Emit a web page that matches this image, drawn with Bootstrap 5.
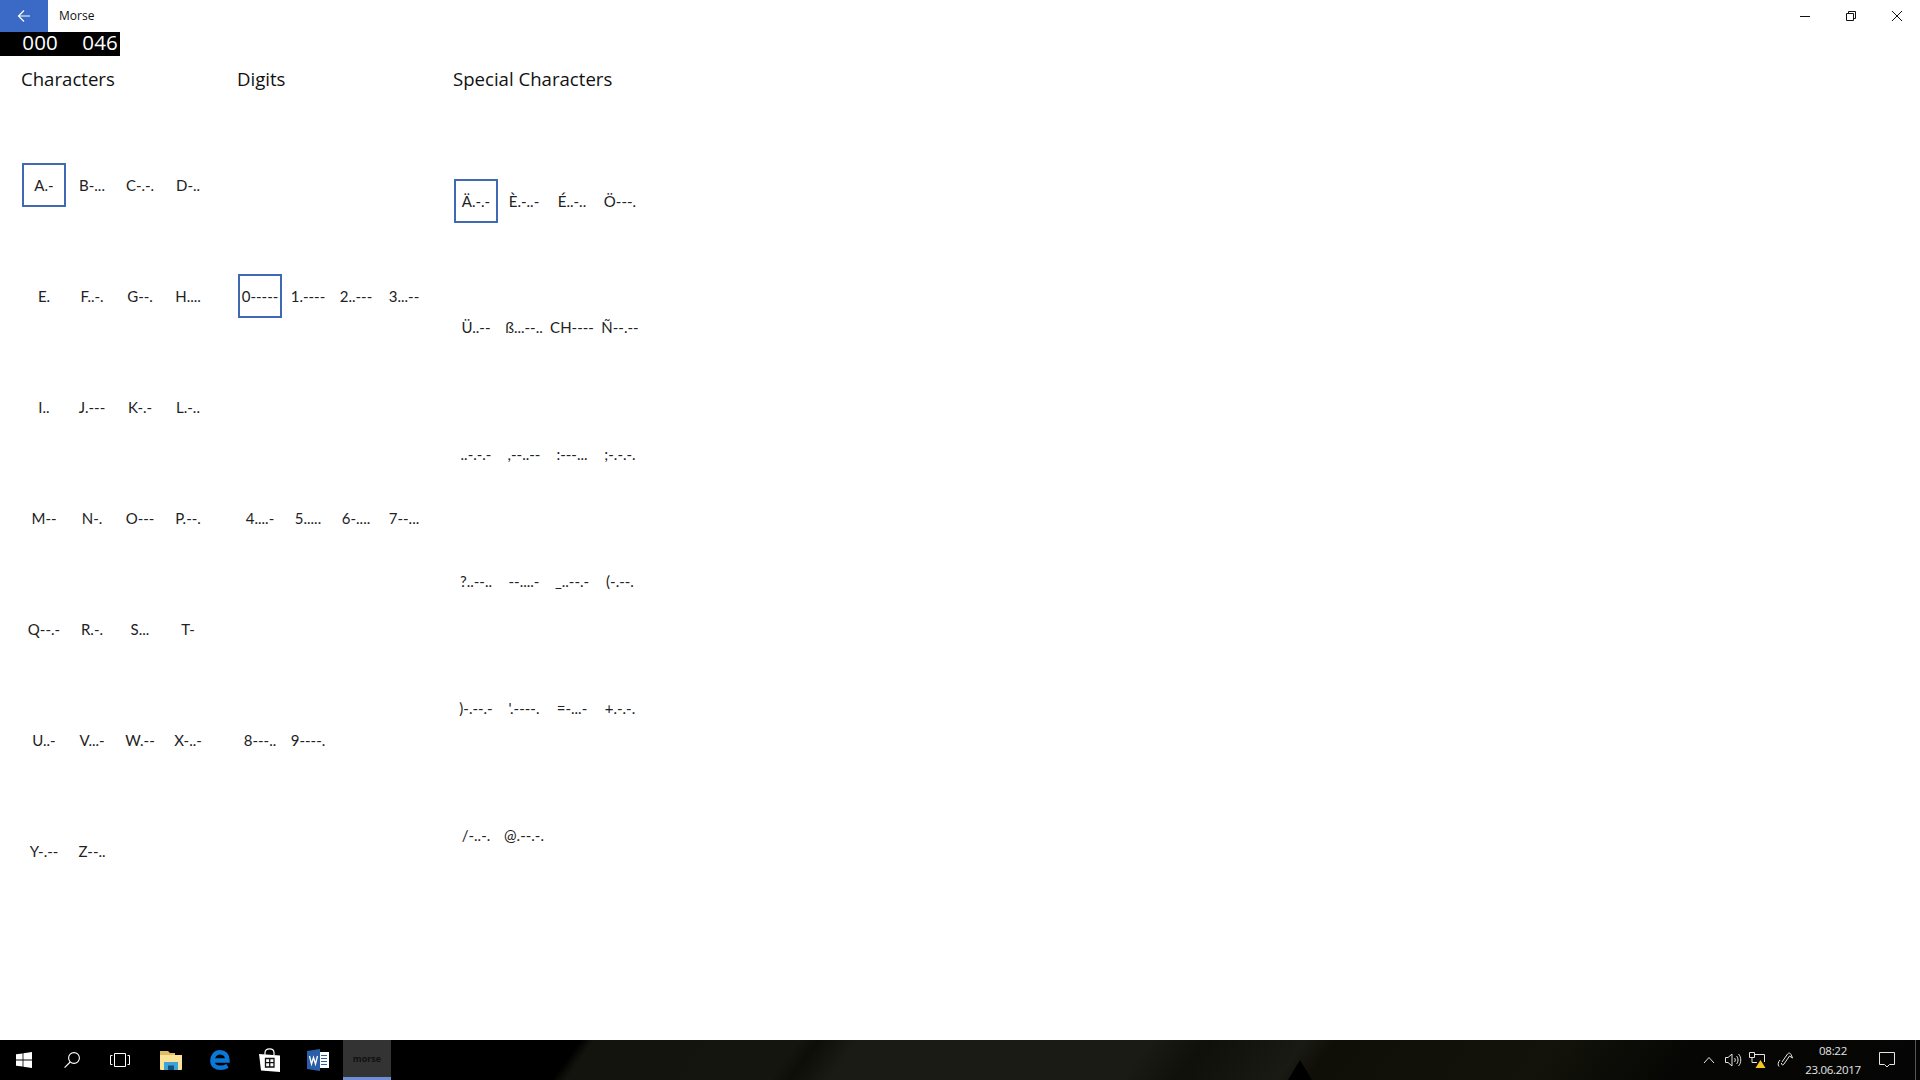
<!DOCTYPE html>
<html lang="en">
<head>
    <meta charset="UTF-8">
    <meta name="viewport" content="width=device-width, initial-scale=1.0">
    <title>Morse</title>
    <link href="https://cdn.jsdelivr.net/npm/bootstrap@5.3.2/dist/css/bootstrap.min.css" rel="stylesheet">
    <style>
        body { background: #fff; color: #111; font-family: "Open Sans", "Noto Sans", sans-serif; font-size: 14px; height: 1080px; overflow: hidden; }
        .title-bar { height: 32px; }
        .back-btn { width: 48px; background: #3b69c6; }
        .app-title { font-size: 12px; margin-left: 11px; }
        .win-btn { width: 46px; }
        .counter { width: 120px; height: 24px; background: #000; color: #fff; font-size: 20.5px; line-height: 20px; letter-spacing: .2px; }
        .counter span { width: 60px; padding-right: 2px; text-align: right; }
        .board { padding-left: 20px; gap: 24px; }
        .board-col { width: 192px; }
        .board-col h2 { font-size: 18.6px; font-weight: 400; height: 40px; line-height: 45px; margin: 0; padding-left: 1px; }
        .rows { height: 844px; }
        .cell { width: 44px; height: 44px; margin: 0 2px; white-space: nowrap; color: #222; font-family: "Lato", sans-serif; font-size: 15px; }
        .cell.picked { border: 2px solid #3f69b3; }
        .task-bar { height: 40px; color: #e4e4e4; background: linear-gradient(126deg, #000 29.8%, #14140e 30.5%, #15150f 41%, #0e0e08 42%, #1b1b16 44%, #1b1b16 59%, #10100a 62%, #1a1a15 67%, #0f0f07 68.5%, #13130b 80%, #060604 87%, #050505 100%); }
        .wall-shade { left: 1288px; bottom: 0; width: 24px; height: 20px; background: #000; clip-path: polygon(50% 0, 100% 100%, 0 100%); }
        .tb-btn { width: 48px; }
        .tb-pin { margin-left: 1px; }
        .tb-first { margin-left: 3px; }
        .tb-active { background: #333; border-bottom: 3px solid #6f8fd6; }
        .tb-active span { color: #111; font-size: 9px; font-weight: 700; line-height: 1; }
        .tray { width: 24px; }
        .tray-pen { margin-left: 4px; }
        .clock { width: 72px; font-size: 11.5px; letter-spacing: -.3px; line-height: 19px; }
        .action-btn { width: 36px; margin-right: 10px; }
        .show-desktop { width: 5px; border-left: 1px solid #555; }
    </style>
</head>
<body class="d-flex flex-column">
    <div class="title-bar d-flex align-items-center">
        <div class="back-btn h-100 d-flex align-items-center justify-content-center">
            <svg width="16" height="16" viewBox="0 0 16 16" fill="none" stroke="#fff" stroke-width="1.2"><path d="M14 8H2.5M8 2.5 2.5 8 8 13.5"/></svg>
        </div>
        <div class="app-title">Morse</div>
        <div class="ms-auto d-flex h-100">
            <div class="win-btn d-flex align-items-center justify-content-center">
                <svg width="12" height="12" viewBox="0 0 12 12" stroke="#111" fill="none"><path d="M1 6.5H11"/></svg>
            </div>
            <div class="win-btn d-flex align-items-center justify-content-center">
                <svg width="12" height="12" viewBox="0 0 12 12" stroke="#111" fill="none"><path d="M1.5 3.5H8.5V10.5H1.5ZM3.5 3.5V1.5H10.5V8.5H8.5"/></svg>
            </div>
            <div class="win-btn d-flex align-items-center justify-content-center">
                <svg width="12" height="12" viewBox="0 0 12 12" stroke="#111" fill="none"><path d="M1 1 11 11M11 1 1 11"/></svg>
            </div>
        </div>
    </div>
    <div class="counter d-flex"><span>000</span><span>046</span></div>

    <main class="board d-flex flex-grow-1">
        <section class="board-col">
            <h2>Characters</h2>
            <div class="rows d-flex flex-column justify-content-evenly">
                <div class="d-flex"><div class="cell picked d-flex align-items-center justify-content-center">A.-</div><div class="cell d-flex align-items-center justify-content-center">B-...</div><div class="cell d-flex align-items-center justify-content-center">C-.-.</div><div class="cell d-flex align-items-center justify-content-center">D-..</div></div>
                <div class="d-flex"><div class="cell d-flex align-items-center justify-content-center">E.</div><div class="cell d-flex align-items-center justify-content-center">F..-.</div><div class="cell d-flex align-items-center justify-content-center">G--.</div><div class="cell d-flex align-items-center justify-content-center">H....</div></div>
                <div class="d-flex"><div class="cell d-flex align-items-center justify-content-center">I..</div><div class="cell d-flex align-items-center justify-content-center">J.---</div><div class="cell d-flex align-items-center justify-content-center">K-.-</div><div class="cell d-flex align-items-center justify-content-center">L.-..</div></div>
                <div class="d-flex"><div class="cell d-flex align-items-center justify-content-center">M--</div><div class="cell d-flex align-items-center justify-content-center">N-.</div><div class="cell d-flex align-items-center justify-content-center">O---</div><div class="cell d-flex align-items-center justify-content-center">P.--.</div></div>
                <div class="d-flex"><div class="cell d-flex align-items-center justify-content-center">Q--.-</div><div class="cell d-flex align-items-center justify-content-center">R.-.</div><div class="cell d-flex align-items-center justify-content-center">S...</div><div class="cell d-flex align-items-center justify-content-center">T-</div></div>
                <div class="d-flex"><div class="cell d-flex align-items-center justify-content-center">U..-</div><div class="cell d-flex align-items-center justify-content-center">V...-</div><div class="cell d-flex align-items-center justify-content-center">W.--</div><div class="cell d-flex align-items-center justify-content-center">X-..-</div></div>
                <div class="d-flex"><div class="cell d-flex align-items-center justify-content-center">Y-.--</div><div class="cell d-flex align-items-center justify-content-center">Z--..</div></div>
            </div>
        </section>
        <section class="board-col">
            <h2>Digits</h2>
            <div class="rows d-flex flex-column justify-content-evenly">
                <div class="d-flex"><div class="cell picked d-flex align-items-center justify-content-center">0-----</div><div class="cell d-flex align-items-center justify-content-center">1.----</div><div class="cell d-flex align-items-center justify-content-center">2..---</div><div class="cell d-flex align-items-center justify-content-center">3...--</div></div>
                <div class="d-flex"><div class="cell d-flex align-items-center justify-content-center">4....-</div><div class="cell d-flex align-items-center justify-content-center">5.....</div><div class="cell d-flex align-items-center justify-content-center">6-....</div><div class="cell d-flex align-items-center justify-content-center">7--...</div></div>
                <div class="d-flex"><div class="cell d-flex align-items-center justify-content-center">8---..</div><div class="cell d-flex align-items-center justify-content-center">9----.</div></div>
            </div>
        </section>
        <section class="board-col">
            <h2>Special Characters</h2>
            <div class="rows d-flex flex-column justify-content-evenly">
                <div class="d-flex"><div class="cell picked d-flex align-items-center justify-content-center">Ä.-.-</div><div class="cell d-flex align-items-center justify-content-center">È.-..-</div><div class="cell d-flex align-items-center justify-content-center">É..-..</div><div class="cell d-flex align-items-center justify-content-center">Ö---.</div></div>
                <div class="d-flex"><div class="cell d-flex align-items-center justify-content-center">Ü..--</div><div class="cell d-flex align-items-center justify-content-center">ß...--..</div><div class="cell d-flex align-items-center justify-content-center">CH----</div><div class="cell d-flex align-items-center justify-content-center">Ñ--.--</div></div>
                <div class="d-flex"><div class="cell d-flex align-items-center justify-content-center">..-.-.-</div><div class="cell d-flex align-items-center justify-content-center">,--..--</div><div class="cell d-flex align-items-center justify-content-center">:---...</div><div class="cell d-flex align-items-center justify-content-center">;-.-.-.</div></div>
                <div class="d-flex"><div class="cell d-flex align-items-center justify-content-center">?..--..</div><div class="cell d-flex align-items-center justify-content-center">--....-</div><div class="cell d-flex align-items-center justify-content-center">_..--.-</div><div class="cell d-flex align-items-center justify-content-center">(-.--.</div></div>
                <div class="d-flex"><div class="cell d-flex align-items-center justify-content-center">)-.--.-</div><div class="cell d-flex align-items-center justify-content-center">'.----.</div><div class="cell d-flex align-items-center justify-content-center">=-...-</div><div class="cell d-flex align-items-center justify-content-center">+.-.-.</div></div>
                <div class="d-flex"><div class="cell d-flex align-items-center justify-content-center">/-..-.</div><div class="cell d-flex align-items-center justify-content-center">@.--.-.</div></div>
            </div>
        </section>
    </main>

    <footer class="task-bar d-flex position-relative">
        <div class="wall-shade position-absolute"></div>
        <div class="tb-btn d-flex align-items-center justify-content-center">
            <svg width="16" height="16" viewBox="0 0 16 16" fill="#fff"><path d="M0 2.3 6.6 1.4V7.6H0ZM7.4 1.3 16 0V7.6H7.4ZM0 8.4H6.6V14.6L0 13.7ZM7.4 8.4H16V16L7.4 14.7Z"/></svg>
        </div>
        <div class="tb-btn d-flex align-items-center justify-content-center">
            <svg width="16" height="16" viewBox="0 0 16 16" fill="none" stroke="#fff" stroke-width="1.1"><circle cx="10" cy="6" r="5.4"/><path d="M6.2 10 .6 15.6"/></svg>
        </div>
        <div class="tb-btn d-flex align-items-center justify-content-center">
            <svg width="20" height="14" viewBox="0 0 20 14" fill="none" stroke="#fff"><path d="M4.5 .5H15.5V13.5H4.5ZM2.5 2.5H.5V11.5H2.5M17.5 2.5H19.5V11.5H17.5"/></svg>
        </div>
        <div class="tb-btn tb-first d-flex align-items-center justify-content-center">
            <svg width="22" height="19" viewBox="0 0 22 19"><path fill="#e0bc62" d="M0 0H8L10 2H15V5H0Z"/><path fill="#fbe39a" d="M0 4H22V18C22 18.5 21.5 19 21 19H1C.5 19 0 18.5 0 18Z"/><path fill="#3da3d8" d="M4 19V11H18V19Z"/><path fill="#14507a" d="M8 19V14.500H14V19Z"/></svg>
        </div>
        <div class="tb-btn tb-pin d-flex align-items-center justify-content-center">
            <svg width="20" height="20" viewBox="0 0 20 20" fill="none" stroke="#0a78d7" stroke-width="4.4"><path d="M3 10.500H17.500C17.500 5 14.500 2.200 10 2.200 5.500 2.200 2.400 6 2.400 11 2.400 15.500 6 17.800 10.500 17.800 13 17.800 15.500 17 17.500 15.800"/></svg>
        </div>
        <div class="tb-btn tb-pin d-flex align-items-center justify-content-center">
            <svg width="21" height="24" viewBox="0 0 21 24"><path fill="none" stroke="#fff" stroke-width="1.2" d="M6 7V4.500C6 2 8 .8 10.500 .8S15 2 15 4.500V7"/><path fill="#fff" d="M0 6 21 7.500V24L2 22.500Z"/><path fill="none" stroke="#111" stroke-width="1.3" d="M6.500 10.500H15V19H6.500ZM10.700 10.500V19M6.500 14.700H15"/></svg>
        </div>
        <div class="tb-btn tb-pin d-flex align-items-center justify-content-center">
            <svg width="22" height="22" viewBox="0 0 22 22"><path fill="#fff" d="M9 3H22V19H9Z"/><path stroke="#2b5ea8" d="M14 6.500H20M14 9.500H20M14 12.500H20M14 15.500H20"/><path fill="#2b5ea8" d="M0 2 13 0V22L0 20Z"/><path fill="none" stroke="#fff" stroke-width="1.3" d="M2.500 7 4.500 15 6.500 8.500 8.500 15 10.500 7"/></svg>
        </div>
        <div class="tb-btn tb-pin tb-active d-flex align-items-center justify-content-center"><span>morse</span></div>

        <div class="ms-auto d-flex align-items-center h-100">
            <div class="tray d-flex justify-content-center">
                <svg width="12" height="8" viewBox="0 0 12 8" fill="none" stroke="#e4e4e4"><path d="M1 7 6 1.500 11 7"/></svg>
            </div>
            <div class="tray d-flex justify-content-center">
                <svg width="17" height="14" viewBox="0 0 17 14" fill="none" stroke="#e4e4e4"><path d="M.5 4.500H3L7 1V13L3 9.500H.5ZM9.500 5C10.500 6 10.500 8 9.500 9M11.500 3C13.500 5 13.500 9 11.500 11M13.500 1C16.500 4 16.500 10 13.500 13"/></svg>
            </div>
            <div class="tray d-flex justify-content-center">
                <svg width="17" height="16" viewBox="0 0 17 16"><path fill="none" stroke="#e4e4e4" d="M.5 .5H5.500V5.500H.5ZM5.500 2.500H15.500V10M3 5.500V10.500H8"/><path fill="#f5c518" d="M11.500 8 16.500 16H6.500Z"/></svg>
            </div>
            <div class="tray tray-pen d-flex justify-content-center">
                <svg width="17" height="16" viewBox="0 0 17 16" fill="none" stroke="#e4e4e4"><path d="M5 10 10.500 2C11.500 .5 13.500 1 14 2.500L15.500 6 12.500 4 7 12C6 13.500 4 13 4.500 11M3 8C1 10 .5 13 2 14.500"/></svg>
            </div>
            <div class="clock text-center"><div>08:22</div><div>23.06.2017</div></div>
            <div class="action-btn d-flex justify-content-center">
                <svg width="16" height="16" viewBox="0 0 16 16" fill="none" stroke="#e4e4e4"><path d="M.5 .5H15.500V12.500H10.500L8 15 5.500 12.500H.5Z"/></svg>
            </div>
            <div class="show-desktop h-100"></div>
        </div>
    </footer>
</body>
</html>
